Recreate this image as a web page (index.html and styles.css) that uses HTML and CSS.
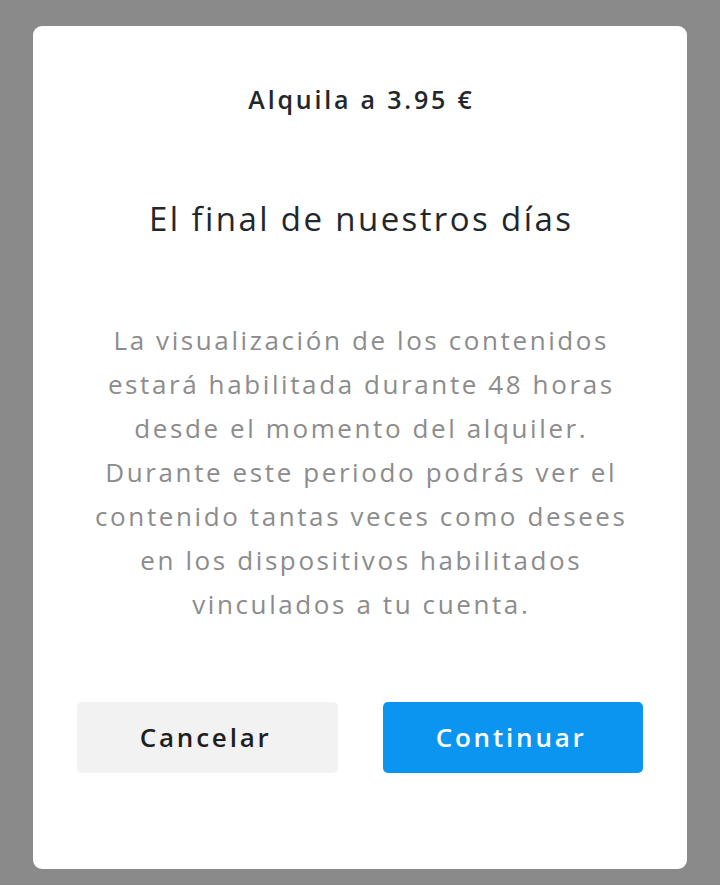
FILE: index.html
```html
<!DOCTYPE html>
<html lang="es">
<head>
    <meta charset="UTF-8">
    <meta name="viewport" content="width=device-width, initial-scale=1.0">
    <title>Alquiler</title>
    <link rel="stylesheet" href="styles.css">
</head>
<body>
    <div class="overlay">
        <div class="dialog">
            <p class="price">Alquila a 3.95 €</p>
            <h2 class="movie">El final de nuestros días</h2>
            <p class="info">La visualización de los contenidos<br>
                estará habilitada durante 48 horas<br>
                desde el momento del alquiler.<br>
                Durante este periodo podrás ver el<br>
                contenido tantas veces como desees<br>
                en los dispositivos habilitados<br>
                vinculados a tu cuenta.</p>
            <div class="actions">
                <button class="btn btn-cancel">Cancelar</button>
                <button class="btn btn-ok">Continuar</button>
            </div>
        </div>
    </div>
</body>
</html>
```

FILE: styles.css
```css
*{
    box-sizing: border-box;
    font-family: 'Open Sans', 'Liberation Sans', sans-serif;
}

html, body{
    height: 100%;
}

body{
    margin: 0;
    background-color: #8a8a8a;
}

.overlay{
    padding: 26px 33px 16px 33px;
}

.dialog{
    background-color: white;
    border-radius: 9px;
    height: 843px;
    padding: 0 44px;
    display: flex;
    flex-direction: column;
    align-items: center;
    text-align: center;
}

.price{
    margin: 58px 0 0 0;
    font-size: 25px;
    line-height: 30px;
    font-weight: 600;
    color: #23272c;
    letter-spacing: 2.8px;
    padding-left: 2.8px;
}

.movie{
    margin: 85px 0 0 0;
    font-size: 33px;
    line-height: 40px;
    font-weight: 400;
    color: #23272c;
    letter-spacing: 2.4px;
    padding-left: 2.4px;
}

.info{
    margin: 79px 0 0 0;
    font-size: 26px;
    line-height: 44px;
    color: #8c8c8c;
    letter-spacing: 2.6px;
    padding-left: 2.6px;
    white-space: nowrap;
}

.actions{
    margin-top: auto;
    margin-bottom: 96px;
    width: 100%;
    display: flex;
    gap: 45px;
}

.btn{
    flex: 1;
    height: 71px;
    border: none;
    border-radius: 5px;
    font-size: 26px;
    font-weight: 600;
    letter-spacing: 2.8px;
    padding-left: 2.8px;
    padding-bottom: 2px;
    cursor: pointer;
}

.btn-cancel{
    background-color: #f2f2f2;
    color: #1e1e1e;
}

.btn-ok{
    background-color: #0a96f0;
    color: white;
}
```
